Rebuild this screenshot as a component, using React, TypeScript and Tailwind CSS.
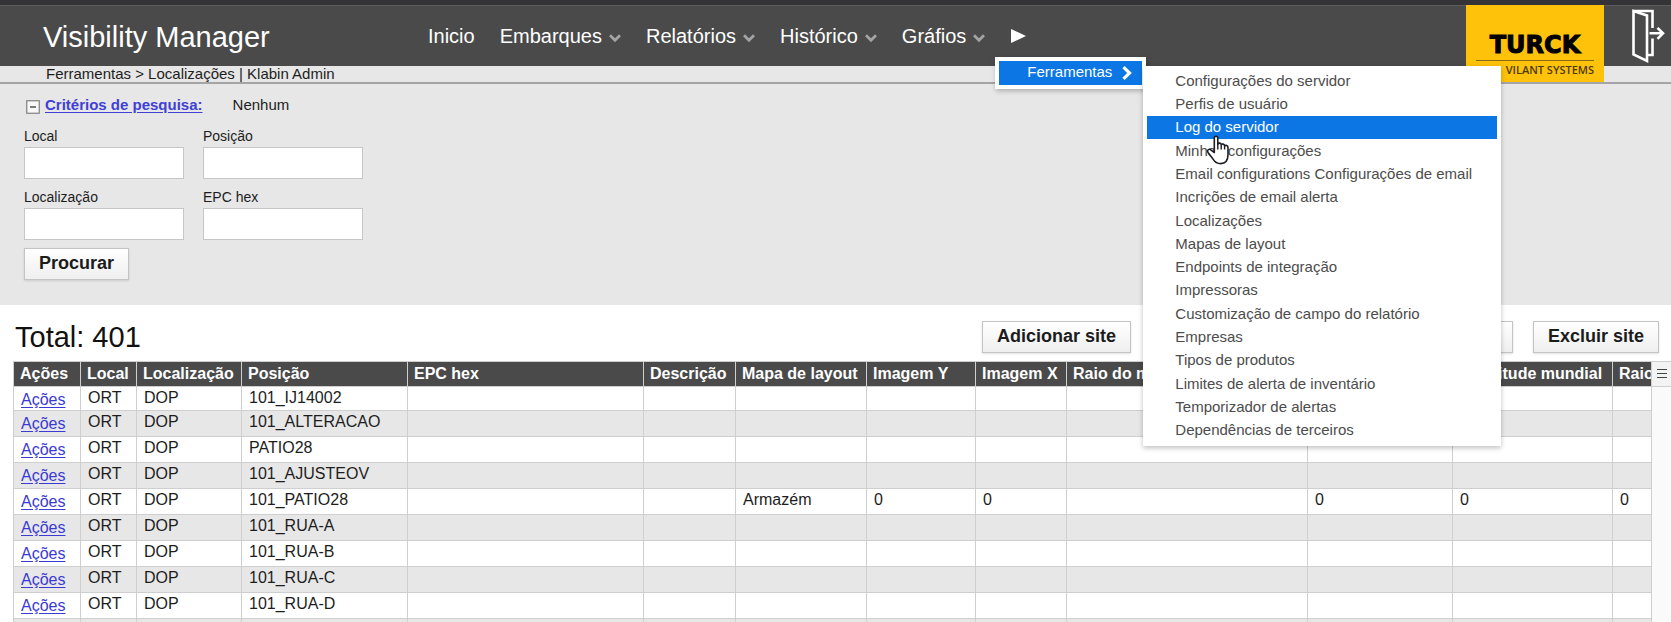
import React from "react";

const menus = [
  { label: "Embarques" },
  { label: "Relatórios" },
  { label: "Histórico" },
  { label: "Gráfios" },
];

const toolItems = [
  "Configurações do servidor",
  "Perfis de usuário",
  "Log do servidor",
  "Minhas configurações",
  "Email configurations Configurações de email",
  "Incrições de email alerta",
  "Localizações",
  "Mapas de layout",
  "Endpoints de integração",
  "Impressoras",
  "Customização de campo do relatório",
  "Empresas",
  "Tipos de produtos",
  "Limites de alerta de inventário",
  "Temporizador de alertas",
  "Dependências de terceiros",
];

const columns = [
  { label: "Ações", width: "w-[68px]" },
  { label: "Local", width: "w-[56px]" },
  { label: "Localização", width: "w-[105px]" },
  { label: "Posição", width: "w-[166px]" },
  { label: "EPC hex", width: "w-[236px]" },
  { label: "Descrição", width: "w-[92px]" },
  { label: "Mapa de layout", width: "w-[131px]" },
  { label: "Imagem Y", width: "w-[109px]" },
  { label: "Imagem X", width: "w-[91px]" },
  { label: "Raio do mapa", width: "w-[241px]" },
  { label: "Latitude mundial", width: "w-[145px]" },
  { label: "Longitude mundial", width: "w-[160px]" },
  { label: "Raio", width: "w-[120px]" },
];

const positions = [
  "101_IJ14002",
  "101_ALTERACAO",
  "PATIO28",
  "101_AJUSTEOV",
  "101_PATIO28",
  "101_RUA-A",
  "101_RUA-B",
  "101_RUA-C",
  "101_RUA-D",
  "101_RUA-E",
];

const rows = positions.map((position) => [
  "ORT",
  "DOP",
  position,
  "",
  "",
  ...(position === "101_PATIO28"
    ? ["Armazém", "0", "0", "", "0", "0", "0"]
    : ["", "", "", "", "", "", ""]),
]);

const fields = [
  { id: "local", label: "Local" },
  { id: "posicao", label: "Posição" },
  { id: "localizacao", label: "Localização" },
  { id: "epc", label: "EPC hex" },
];

function Chevron() {
  return (
    <svg className="mt-1 h-3 w-3 shrink-0" viewBox="0 0 12 12" fill="none" stroke="#a3a3a3" strokeWidth="2.8" aria-hidden="true">
      <path d="M1 3.2 L6 8.2 L11 3.2" />
    </svg>
  );
}

function ActionButton({ children, className = "" }: { children: React.ReactNode; className?: string }) {
  return (
    <button
      type="button"
      className={`h-8 border border-[#c4c4c4] bg-linear-to-b from-white to-[#efefef] px-[14px] pb-[2px] text-[18px] leading-6 font-bold whitespace-nowrap text-[#1c1c1c] shadow-[0_1px_2px_rgba(0,0,0,0.12)] ${className}`}
    >
      {children}
    </button>
  );
}

function HandCursor() {
  return (
    <svg className="pointer-events-none absolute top-[69px] left-[63px] h-[30px] w-[24px]" viewBox="0 0 24 30" aria-hidden="true">
      <path
        d="M8.3 17.5 V3.2 C8.3 0.6 11.8 0.6 11.8 3.2 V9.2 C12.6 7.4 15.2 7.9 15.2 9.8 C16.2 8.4 18.6 9 18.6 10.9 C19.8 9.8 22 10.5 22 12.6 V19.5 C22 25.5 19.4 28.6 14.6 28.6 C10.8 28.6 8.8 27 6.8 23.8 L2 17.4 C0.6 15.3 3 13.3 4.8 14.9 Z"
        fill="#fff"
        stroke="#1d1d24"
        strokeWidth="1.6"
        strokeLinejoin="round"
      />
      <path d="M11.8 9 V14.5 M15.2 10 V14.5 M18.6 11 V14.5" fill="none" stroke="#1d1d24" strokeWidth="1.4" />
    </svg>
  );
}

function ToolsMenu() {
  return (
    <ul className="absolute top-[51px] -left-[15px] z-20 w-[151px] bg-white p-1 shadow-[1px_2px_5px_rgba(0,0,0,0.25)]">
      <li className="relative">
        <a href="#ferramentas" className="flex h-6 items-center bg-[#0c77e4] pr-[10px] pb-[2px] pl-[28px] text-[15px] leading-5 text-white">
          Ferramentas
          <svg className="mt-[2px] ml-auto h-[14px] w-[10px]" viewBox="0 0 10 14" fill="none" stroke="#fff" strokeWidth="3.2" aria-hidden="true">
            <path d="M1.5 1.2 L7.5 7 L1.5 12.8" />
          </svg>
        </a>
        <div className="absolute top-[5px] left-[144px] w-[358px] bg-white px-1 pt-[3px] pb-1 shadow-[0_2px_5px_rgba(0,0,0,0.25)]">
          <ul className="grid h-[373px] auto-rows-fr">
            {toolItems.map((item) => (
              <li key={item} className="flex">
                <a
                  href="#item"
                  className={
                    item === "Log do servidor"
                      ? "flex grow items-center bg-[#0c77e4] pl-[28px] text-[15px] leading-5 text-white"
                      : "flex grow items-center pl-[28px] text-[15px] leading-5 text-[#4c4c4c]"
                  }
                >
                  {item}
                </a>
              </li>
            ))}
          </ul>
          <HandCursor />
        </div>
      </li>
    </ul>
  );
}

function Header() {
  return (
    <header className="relative z-10">
      <div className="h-[5px] bg-[#343436]" />
      <div className="flex h-[61px] items-center border-t border-[#5c5c5c] bg-[#4a4a4a] text-white">
        <h1 className="w-[428px] shrink-0 pt-[2px] pl-[43px] text-[29px] leading-8">Visibility Manager</h1>
        <nav>
          <ul className="flex items-center gap-[25px] text-[20px] leading-[60px] whitespace-nowrap">
            <li>
              <a href="#inicio">Inicio</a>
            </li>
            {menus.map(({ label }) => (
              <li key={label}>
                <a href="#menu" className="flex items-center gap-[7px]">
                  {label}
                  <Chevron />
                </a>
              </li>
            ))}
            <li className="relative h-[60px]">
              <button type="button" aria-label="Mais" className="flex h-[60px] items-center">
                <svg className="h-4 w-4" viewBox="0 0 16 16" fill="#fff" aria-hidden="true">
                  <path d="M1 1 L16 8 L1 15 Z" />
                </svg>
              </button>
              <ToolsMenu />
            </li>
          </ul>
        </nav>
        <a href="#sair" aria-label="Sair" className="mr-[6px] ml-auto">
          <svg className="h-[56px] w-[34px]" viewBox="0 0 34 56" fill="none" stroke="#fff" strokeWidth="2.6" aria-hidden="true">
            <path d="M2.5 3 L16 7.5 V53 L2.5 46.5 Z" />
            <path d="M2.5 3 H21.5 V20 M21.5 30.5 V47 H16.5" />
            <path d="M18.5 25.3 H31 M26.5 19.8 L32 25.3 L26.5 30.8" />
          </svg>
        </a>
      </div>
      <p className="h-[18px] border-b-2 border-[#a5a5a5] bg-[#e7e7e7] pl-[46px] text-[15px] leading-4 text-[#1d1d1d]">
        Ferramentas &gt; Localizações | Klabin Admin
      </p>
      <div className="absolute top-[5px] right-[67px] flex h-[77px] w-[138px] flex-col bg-[#ffc20a] px-[10px] pt-[27px]">
        <span className="block border-b border-[#8a6a10] pb-[1px] text-center font-['DejaVu_Sans'] text-[24px] leading-[27px] font-bold text-black [-webkit-text-stroke:1px_#000]">
          TURCK
        </span>
        <span className="pt-px text-right font-['Open_Sans'] text-[11px] leading-4 font-semibold whitespace-nowrap text-[#4b3a08]">
          VILANT SYSTEMS
        </span>
      </div>
    </header>
  );
}

function SearchPanel() {
  return (
    <section className="bg-[#e7e7e7] px-6 pt-3 pb-[25px] text-[#1d1d1d]">
      <div className="mb-[14px] flex items-center pl-[2px] text-[15px] leading-[18px]">
        <svg className="mt-[3px] mr-[5px] h-[14px] w-[14px]" viewBox="0 0 14 14" aria-hidden="true">
          <rect x="0.75" y="0.75" width="12.5" height="12.5" fill="#f7f7f7" stroke="#808080" strokeWidth="1.2" />
          <path d="M4 7 H10" stroke="#444" strokeWidth="1.4" />
        </svg>
        <a href="#criterios" className="mr-[30px] font-bold text-[#4040d8] underline underline-offset-2">
          Critérios de pesquisa:
        </a>
        <span>Nenhum</span>
      </div>
      <form>
        <div className="mb-2 grid grid-cols-[160px_160px] gap-x-[19px] gap-y-[10px]">
          {fields.map(({ id, label }) => (
            <div key={id} className="flex flex-col gap-[3px]">
              <label htmlFor={id} className="text-[14px] leading-4">
                {label}
              </label>
              <input id={id} type="text" className="h-8 border border-[#c6c6c6] bg-white px-2 text-[15px]" />
            </div>
          ))}
        </div>
        <ActionButton>Procurar</ActionButton>
      </form>
    </section>
  );
}

function Results() {
  return (
    <section className="flex min-h-0 grow flex-col">
      <div className="flex items-center gap-5 pt-4 pr-3 pb-2 pl-[15px]">
        <h2 className="mr-auto text-[29px] leading-8 text-[#111]">Total: 401</h2>
        <ActionButton>Adicionar site</ActionButton>
        <ActionButton className="w-[362px]">Editar site</ActionButton>
        <ActionButton>Excluir site</ActionButton>
      </div>
      <div className="flex min-h-0 grow pl-[13px]">
        <div className="min-w-0 grow overflow-hidden border-r border-[#cfcfcf]">
          <table className="w-[1720px] table-fixed border-separate border-spacing-0 text-left text-[16px] leading-5">
            <thead>
              <tr>
                {columns.map(({ label, width }) => (
                  <th
                    key={label}
                    scope="col"
                    className={`h-[26px] border-t border-r border-b border-[#cfcfcf] bg-[#4a4a4a] p-0 pl-[6px] font-bold whitespace-nowrap text-white first:border-l ${width}`}
                  >
                    {label}
                  </th>
                ))}
              </tr>
            </thead>
            <tbody>
              {rows.map((cells) => (
                <tr key={cells[2]} className="h-[26px] bg-white text-[#1d1d1d] first:h-6 even:bg-[#e7e7e7]">
                  <td className="border-x border-b border-[#cfcfcf] p-0 pt-[3px] pl-[7px] align-top">
                    <a href="#acoes" className="block text-[#3a3ad6] underline underline-offset-2">
                      Ações
                    </a>
                  </td>
                  {cells.map((cell, i) => (
                    <td key={i} className="border-r border-b border-[#cfcfcf] p-0 pt-px pl-[7px] align-top whitespace-nowrap">
                      {cell}
                    </td>
                  ))}
                </tr>
              ))}
            </tbody>
          </table>
        </div>
        <div className="w-[19px] shrink-0 bg-[#fafafa]">
          <button type="button" aria-label="Colunas" className="flex h-[26px] w-full items-center justify-center border-y border-[#cfcfcf] bg-[#f3f3f3]">
            <svg className="h-3 w-3" viewBox="0 0 12 12" stroke="#444" strokeWidth="1.2" aria-hidden="true">
              <path d="M1 1.5 H11 M1 5.5 H11 M1 9.5 H11" />
            </svg>
          </button>
        </div>
      </div>
    </section>
  );
}

export default function App() {
  return (
    <div className="flex h-screen flex-col overflow-hidden bg-white font-['Liberation_Sans',Arial,sans-serif]">
      <Header />
      <SearchPanel />
      <Results />
    </div>
  );
}
